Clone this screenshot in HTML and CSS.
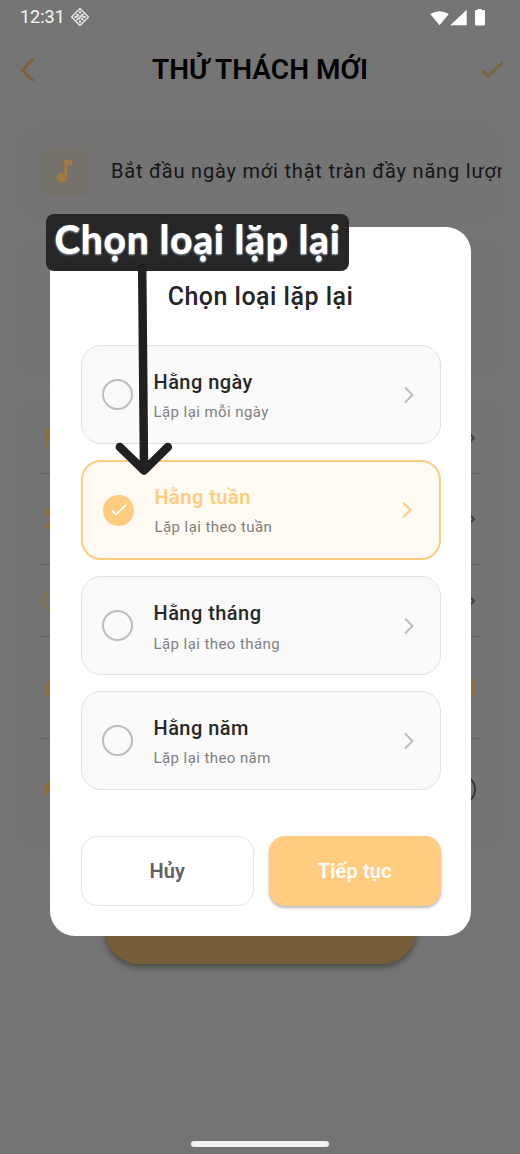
FILE: index.html
```html
<!DOCTYPE html>
<html lang="vi">
<head>
<meta charset="utf-8">
<title>Thử thách mới</title>
<link rel="stylesheet" href="styles.css">
</head>
<body>
<div class="screen">
  <header class="status">
    <span class="time">12:31</span>
    <svg class="debug" width="20" height="20" viewBox="0 0 20 20" fill="none" stroke="#e6e6e6"><path d="M10 1.600 18.400 10 10 18.400 1.600 10Z" stroke-width="1.400" stroke-linejoin="round"/><path d="M10 4v2.500M6.500 7l2.500 2M13.500 7 11 9M4.500 10h3M9 11.500l2-2.500M12.500 10h3M6.500 13 9 11.500M11 11.500l2.500 1.500M10 13.500V16" stroke-width="2"/></svg>
    <svg class="signals" width="58" height="20" viewBox="0 0 58 20" fill="#fff"><path d="M.3 5Q9.500-.7 18.800 5L9.500 16.200Z"/><path d="M36.700 .7V16.200H20.200Z"/><path d="M47.500 1v-1h4v1h2.200q1.300 0 1.300 1.300v13q0 1.300-1.300 1.300h-7.400q-1.300 0-1.300-1.300V2.300Q45 1 46.300 1Z"/></svg>
  </header>
  <div class="appbar">
    <svg width="20" height="28" viewBox="0 0 20 28" fill="none" stroke="#7f613a" stroke-width="3"><path d="M15.300 3 4.300 14 15.300 25"/></svg>
    <h1>THỬ THÁCH MỚI</h1>
    <svg width="24" height="20" viewBox="0 0 24 20" fill="none" stroke="#7f613a" stroke-width="2.500"><path d="M3.300 10.500 9.300 16.500 23.500 2.500"/></svg>
  </div>
  <section class="card intro">
    <div class="note"><svg width="18" height="24" viewBox="0 0 18 24" fill="#a27a41"><path d="M8.300 1H16v5h-4.700v12.300a5 5 0 1 1-3-4.300Z"/></svg></div>
    <p>Bắt đầu ngày mới thật tràn đầy năng lượng</p>
  </section>
  <section class="card blank"></section>
  <section class="card settings">
    <div class="row r1"><svg class="ic" width="24" height="24" viewBox="0 0 24 24" fill="#906d3d"><path d="M5 3h9l1 3h6v10h-8l-1-3H7v8H5Z"/></svg><svg class="chev" width="12" height="14" viewBox="0 0 12 14"><path d="m3 2 5 5-5 5"/></svg></div>
    <div class="row r2"><svg class="ic" width="24" height="24" viewBox="0 0 24 24" fill="#906d3d"><path d="M6 2h12v3H9v5H6ZM4 19l6-5v3.500h10v3H10V24Z"/></svg><svg class="chev" width="12" height="14" viewBox="0 0 12 14"><path d="m3 2 5 5-5 5"/></svg></div>
    <div class="row r3"><svg class="ic" width="24" height="24" viewBox="0 0 24 24" fill="none" stroke="#906d3d" stroke-width="2"><circle cx="12.500" cy="12" r="9.500"/><path d="M12 6v7l4 3"/></svg><svg class="chev" width="12" height="14" viewBox="0 0 12 14"><path d="m3 2 5 5-5 5"/></svg></div>
    <div class="row r4"><svg class="ic" width="24" height="24" viewBox="0 0 24 24" fill="#906d3d"><path d="M4 19v-1l2-2v-6a6 7 0 0 1 12 0v6l2 2v1Z"/></svg><i class="toggle"></i></div>
    <div class="row r5"><svg class="ic" width="24" height="24" viewBox="0 0 24 24" fill="#906d3d"><path d="M8 20C1 14 4 5 12 3q10 6 6 16c-4-8-13-5-10 1Z"/></svg><i class="toggle off"></i></div>
  </section>
  <div class="save"></div>
  <div class="homebar"></div>

  <div class="dialog">
    <h2>Chọn loại lặp lại</h2>
    <div class="options">
      <div class="option"><i class="radio"></i><div class="txt"><b>Hằng ngày</b><span>Lặp lại mỗi ngày</span></div><svg class="go" width="12" height="20" viewBox="0 0 12 20"><path d="m2 2.500 7.500 7.500L2 17.500"/></svg></div>
      <div class="option on"><i class="radio"><svg width="16" height="14" viewBox="0 0 16 14" fill="none" stroke="#fff" stroke-width="1.800"><path d="m1 7.500 4 4L15 1.800"/></svg></i><div class="txt"><b>Hằng tuần</b><span>Lặp lại theo tuần</span></div><svg class="go" width="12" height="20" viewBox="0 0 12 20"><path d="m2 2.500 7.500 7.500L2 17.500"/></svg></div>
      <div class="option o3"><i class="radio"></i><div class="txt"><b>Hằng tháng</b><span>Lặp lại theo tháng</span></div><svg class="go" width="12" height="20" viewBox="0 0 12 20"><path d="m2 2.500 7.500 7.500L2 17.500"/></svg></div>
      <div class="option"><i class="radio"></i><div class="txt"><b>Hằng năm</b><span>Lặp lại theo năm</span></div><svg class="go" width="12" height="20" viewBox="0 0 12 20"><path d="m2 2.500 7.500 7.500L2 17.500"/></svg></div>
    </div>
    <div class="actions"><div class="btn cancel">Hủy</div><div class="btn next">Tiếp tục</div></div>
  </div>

  <div class="callout">Chọn loại lặp lại</div>
  <svg class="arrow" width="70" height="220" viewBox="0 0 70 220" fill="none" stroke="#202020" stroke-width="8.500" stroke-linecap="round" stroke-linejoin="round"><path d="M32.200 8 34 209M9.800 187 34 210.500 57.800 187"/></svg>
</div>
</body>
</html>
```
FILE: styles.css
```css
* { box-sizing: border-box; }
body { margin: 0; font-family: Roboto, "Noto Sans", sans-serif; }
h1, h2, p { margin: 0; }
svg { display: block; flex: none; }
.screen { position: relative; width: 520px; height: 1154px; overflow: hidden; background: #757575; display: flex; flex-direction: column; }
.status { height: 34px; display: flex; align-items: center; padding: 0 32px 0 20px; color: #f5f5f5; }
.time { font-size: 18px; line-height: 34px; letter-spacing: 0; }
.debug { margin-left: 5px; }
.signals { margin-left: auto; margin-top: 3px; }
.appbar { height: 71px; display: flex; align-items: center; justify-content: space-between; padding: 0 17px 0 18px; }
.appbar h1 { font-size: 28px; line-height: 32px; font-weight: 600; color: #020202; white-space: nowrap; margin-left: 3px; }
.card { margin: 0 18px 0 19px; border-radius: 24px; background: #747474; box-shadow: 0 2px 8px rgba(0,0,0,.035); flex: none; }
.intro { margin-top: 20px; height: 92px; display: flex; align-items: center; padding-left: 21px; overflow: hidden; }
.note { width: 50px; height: 51px; border-radius: 10px; background: #75716b; display: flex; align-items: center; justify-content: center; flex: none; }
.intro p { margin-left: 21px; font-size: 20px; letter-spacing: .8px; color: #161616; white-space: nowrap; }
.blank { margin-top: 24px; height: 132px; }
.settings { margin-top: 26px; height: 446px; padding: 0 21px; }
.row { display: flex; align-items: center; justify-content: space-between; border-bottom: 1px solid #606060; }
.r1 { height: 75px; padding-top: 4px; }
.r2 { height: 91px; }
.r3 { height: 72px; }
.r4 { height: 102px; }
.r5 { height: 104px; border: 0; padding-bottom: 4px; }
.chev { margin-right: 3px; fill: none; stroke: #404040; stroke-width: 1.8; }
.toggle { width: 54px; height: 31px; border-radius: 16px; background: #906f43; margin-right: 5px; }
.off { background: none; border: 2px solid #35363b; }
.save { margin: 42px 104px 0 105px; height: 77px; border-radius: 34px; background: #755d38; box-shadow: 0 3px 6px rgba(0,0,0,.4); flex: none; }
.homebar { width: 138px; height: 6px; border-radius: 3px; background: #f2f2f2; margin: auto auto 7px 191px; }
.dialog { position: absolute; left: 50px; top: 227px; width: 421px; height: 709px; border-radius: 25px; background: #fff; padding: 52px 30.5px 0 30.5px; }
.dialog h2 { height: 36px; line-height: 36px; text-align: center; font-size: 25px; font-weight: 500; letter-spacing: .48px; color: #252525; white-space: nowrap; }
.options { margin-top: 30px; display: flex; flex-direction: column; gap: 16px; }
.option { height: 99px; border: 1.5px solid #e2e2e2; border-radius: 20px; background: #fafafa; display: flex; align-items: center; padding: 0 25px 0 20.5px; }
.option.on { height: 100px; border: 2.5px solid #ffcc80; background: #fffaf2; padding: 0 26px 0 20.5px; }
.option.o3 { height: 99px; }
.radio { width: 31px; height: 31px; border: 2.5px solid #bdbdbd; border-radius: 50%; flex: none; display: flex; align-items: center; justify-content: center; }
.on .radio { background: #ffcc80; border-color: #ffcc80; }
.txt { margin-left: 20.5px; padding-top: 2px; flex: 1; display: flex; flex-direction: column; gap: 7px; white-space: nowrap; }
.on .txt { padding-top: 1px; }
.o3 .txt { padding-top: 3px; gap: 8px; }
.txt b { font-size: 20px; line-height: 26px; font-weight: 500; letter-spacing: .45px; color: #282828; }
.on b { color: #ffcc80; font-weight: 600; }
.txt span { font-size: 15px; line-height: 20px; letter-spacing: .42px; color: #808080; }
.go { fill: none; stroke: #bdbdbd; stroke-width: 2; stroke-linejoin: round; }
.on .go { stroke: #ffcc80; }
.actions { margin-top: 46px; display: flex; gap: 15px; }
.btn { flex: 1; height: 70px; border-radius: 16px; display: flex; align-items: center; justify-content: center; font-size: 20px; font-weight: 600; letter-spacing: .15px; }
.cancel { border: 1.5px solid #e4e4e4; color: #626262; }
.next { background: #ffcc80; color: #fff; box-shadow: 0 2px 3px rgba(0,0,0,.28); }
.callout { position: absolute; left: 46px; top: 214px; width: 303px; height: 57px; border-radius: 8px; background: #262626; color: #fff; display: flex; align-items: center; justify-content: center; padding-bottom: 7px; font-family: Lato, "Open Sans", sans-serif; font-weight: 900; font-size: 39px; letter-spacing: .65px; white-space: nowrap; text-shadow: 0 1px 2px #a9b4c4; }
.arrow { position: absolute; left: 110px; top: 260px; }
```
